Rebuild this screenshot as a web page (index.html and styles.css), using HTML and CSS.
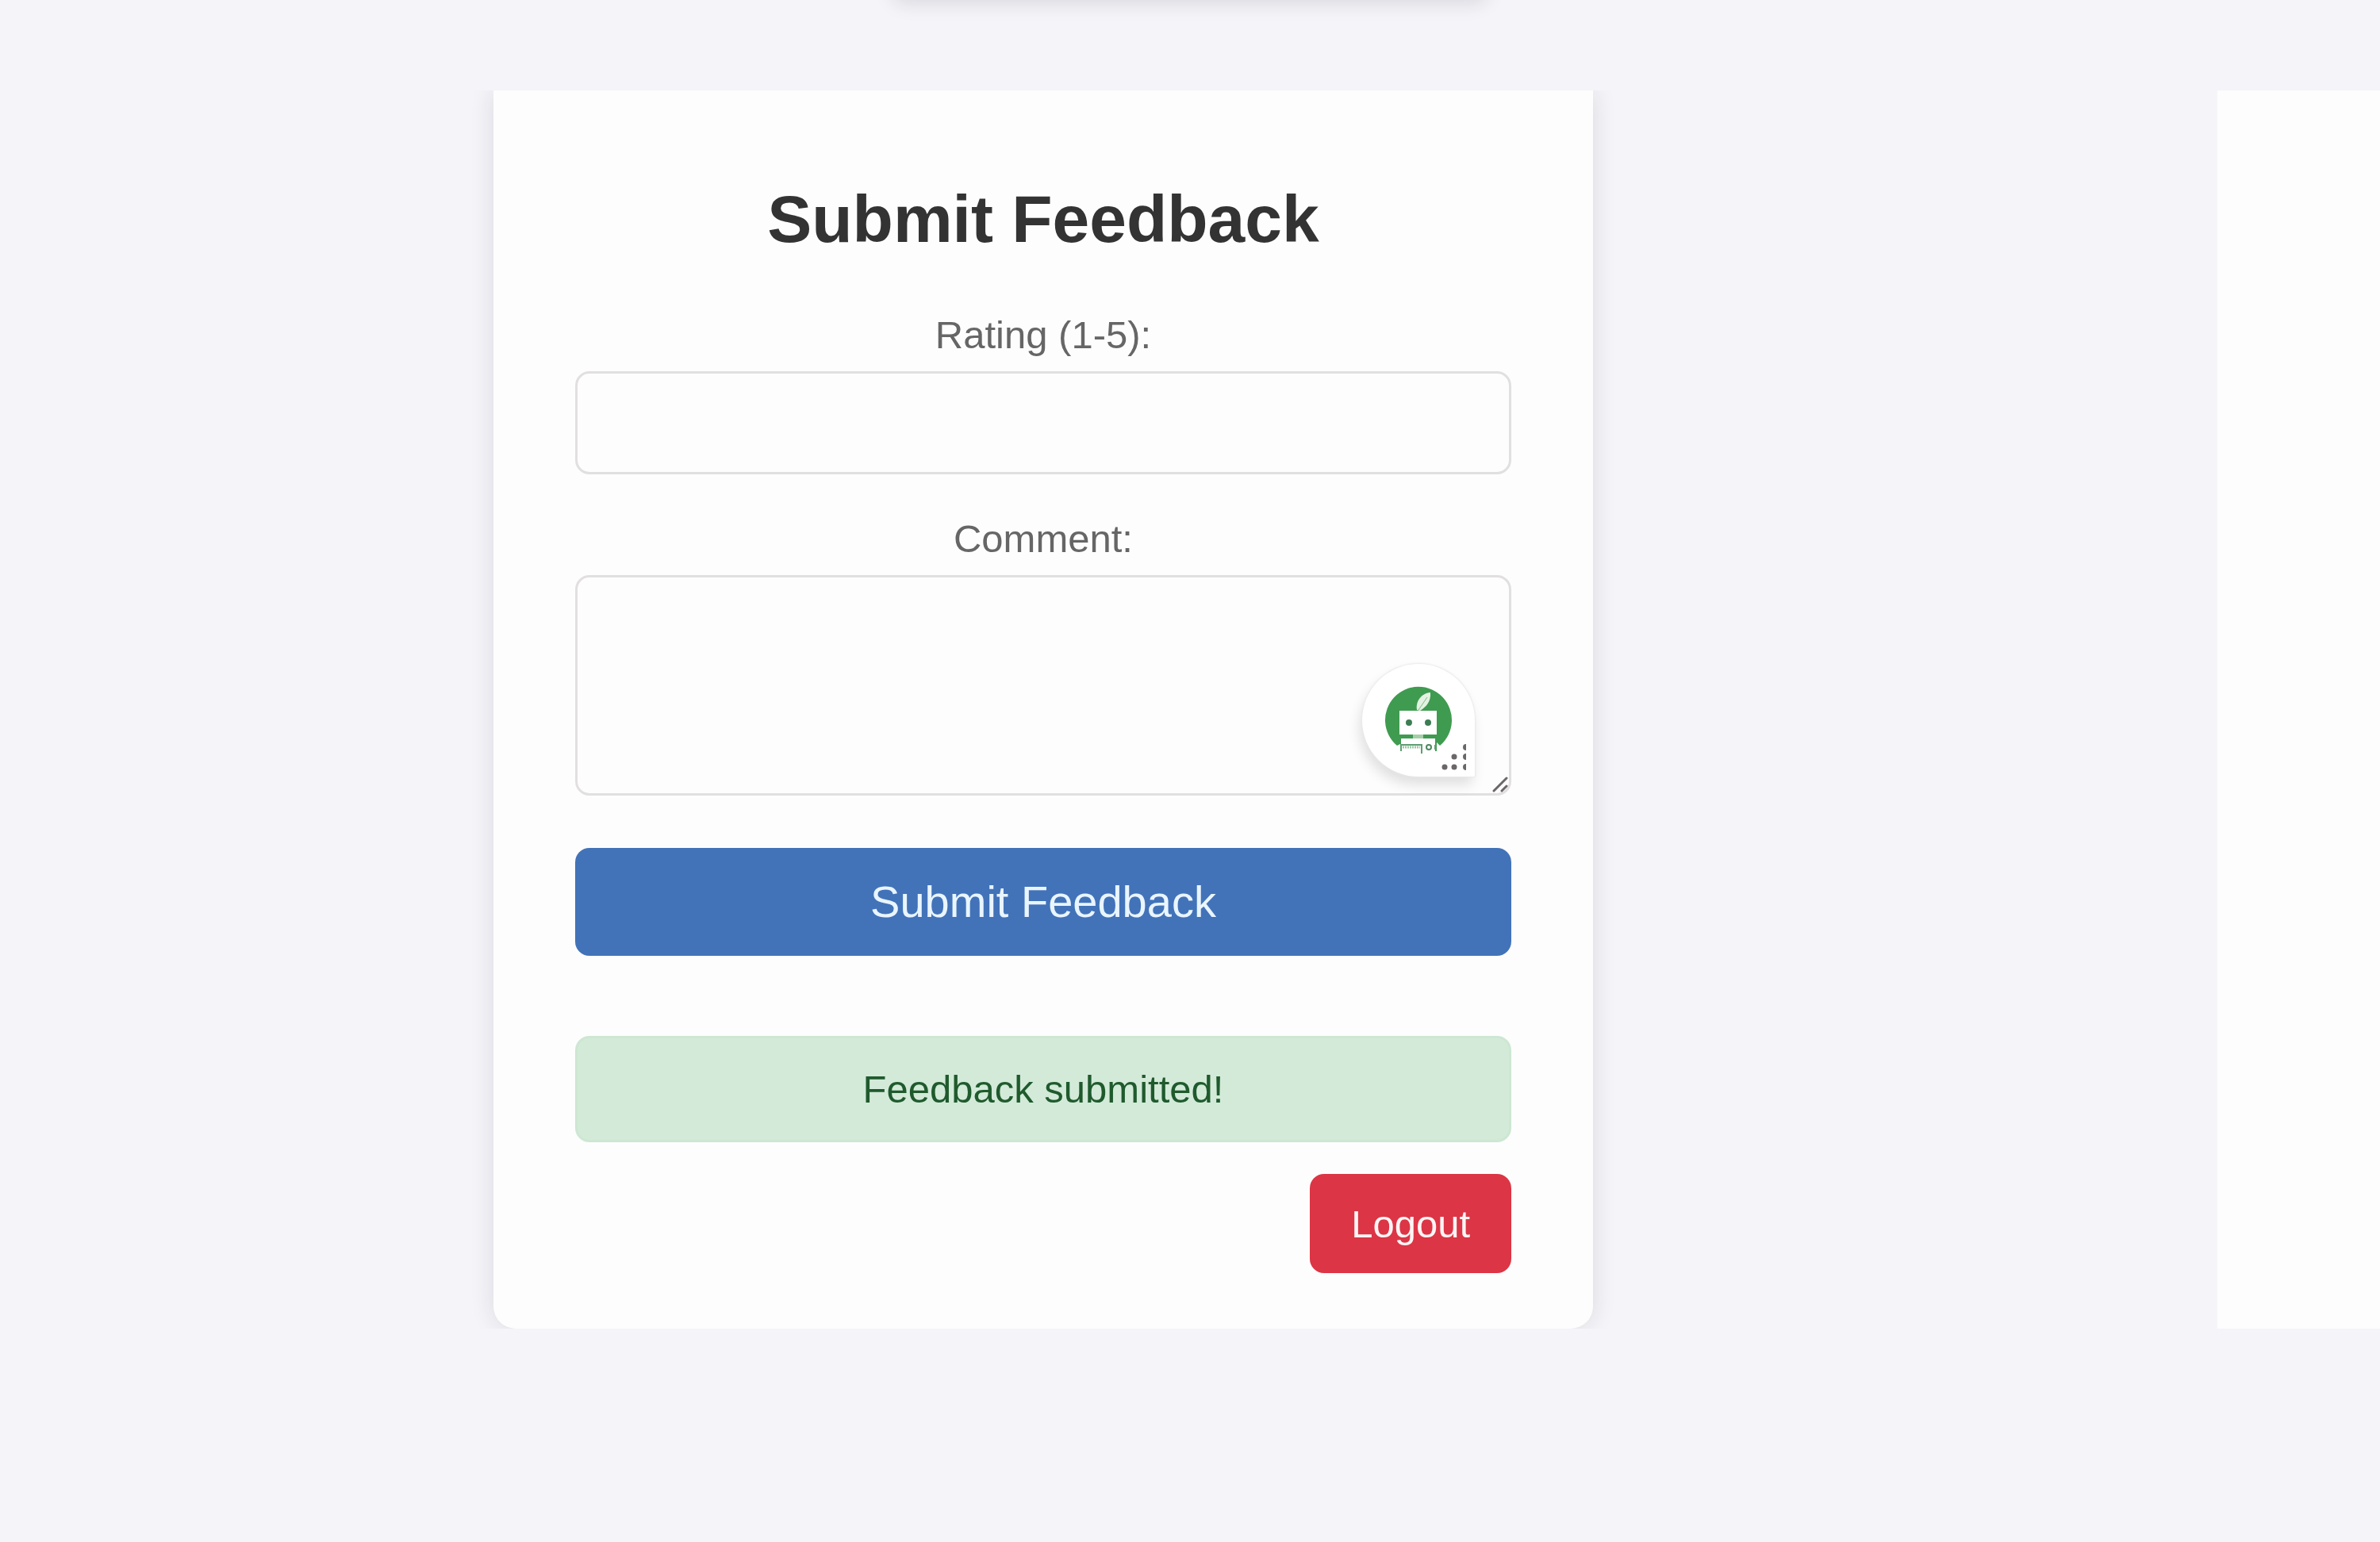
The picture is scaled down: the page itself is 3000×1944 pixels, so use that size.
FILE: index.html
```
<!DOCTYPE html>
<html lang="en">
<head>
<meta charset="utf-8">
<meta name="viewport" content="width=device-width, initial-scale=1">
<title>Submit Feedback</title>
<link rel="stylesheet" href="styles.css">
</head>
<body>
<header class="top"><div class="top-panel"></div></header>
<main class="stage">
  <section class="card">
    <h1 class="title">Submit Feedback</h1>
    <form class="form">
      <div class="field">
        <label class="label" for="rating">Rating (1-5):</label>
        <input class="control" id="rating" type="text" inputmode="numeric">
      </div>
      <div class="field">
        <label class="label" for="comment">Comment:</label>
        <div class="comment-box">
          <textarea class="control comment" id="comment"></textarea>
          <div class="assistant">
            <svg class="assistant-icon" viewBox="0 0 142 142" aria-hidden="true">
              <path d="M44 103A42 42 0 1 1 98 103L94 99V110H48V101Z" fill="#3f9b50"/>
              <path d="M69 58C67 48 74 37 86 36C87 47 81 54 73 59Z" fill="#e4f2e2"/>
              <path d="M71 58L82 42" stroke="#7dbb82" stroke-width="1" fill="none"/>
              <path d="M47 59H94V89H47Z" fill="#fff"/>
              <circle cx="59" cy="74" r="4" fill="#3d7d52"/>
              <circle cx="83" cy="74" r="4" fill="#3d7d52"/>
              <path d="M64 89H77V94H64Z" fill="#a5cfa8"/>
              <path d="M49 94H92V113H49Z" fill="#fff"/>
              <path d="M49 110V102H75V113" stroke="#5f9f72" stroke-width="2" fill="none"/>
              <path d="M51 105H73" stroke="#9bc9a4" stroke-width="3" stroke-dasharray="2 1" fill="none"/>
              <circle cx="84" cy="105" r="3" stroke="#4d8a5c" stroke-width="2" fill="#fff"/>
              <path d="M92 102V108" stroke="#5f9f72" stroke-width="2"/>
              <g fill="#6a6669">
                <circle cx="116" cy="117" r="3.5"/><circle cx="104" cy="130" r="3.5"/><circle cx="116" cy="130" r="3.5"/>
                <path d="M131 101V109A4 4 0 1 1 131 101ZM131 113V121A4 4 0 1 1 131 113ZM131 126V134A4 4 0 1 1 131 126Z"/>
              </g>
            </svg>
          </div>
          <svg class="grip" viewBox="0 0 20 20" aria-hidden="true"><path d="M2 18L18 2M12 18L18 12" stroke="#6b6769" stroke-width="3" stroke-linecap="round"/></svg>
        </div>
      </div>
      <button class="button submit" type="button">Submit Feedback</button>
    </form>
    <p class="alert" role="status">Feedback submitted!</p>
    <button class="button logout" type="button">Logout</button>
  </section>
  <div class="next-panel"></div>
</main>
</body>
</html>
```
FILE: styles.css
```
* { box-sizing: border-box; }

body {
  margin: 0;
  min-height: 100vh;
  background: #f4f4f9;
  font-family: "Liberation Sans", Arial, sans-serif;
  font-size: 49px;
  line-height: 56px;
}

.top {
  height: 114px;
  overflow: hidden;
}

.top-panel {
  width: 25%;
  height: 60px;
  margin: -60px auto 0;
  border-radius: 16px;
  background: #fdfdfd;
  box-shadow: 0 4px 24px rgba(40, 30, 40, 0.13);
}

.stage {
  display: grid;
  grid-template-columns: 622fr 1386fr 787fr 205fr;
  overflow: hidden;
}

.card {
  grid-column: 2;
  display: flex;
  flex-direction: column;
  padding: 112px 103px 70px;
  border-radius: 0 0 28px 28px;
  background: #fdfdfd;
  box-shadow: 0 0 30px rgba(30, 30, 40, 0.12);
}

.next-panel {
  grid-column: 4;
  background: #fdfdfd;
}

.title {
  margin: 0 0 68px;
  color: #333;
  font-size: 84px;
  line-height: 100px;
  text-align: center;
}

.form {
  display: flex;
  flex-direction: column;
  gap: 53px;
}

.field {
  display: flex;
  flex-direction: column;
  gap: 18px;
}

.label {
  color: #666;
  text-align: center;
}

.control {
  display: block;
  width: 100%;
  height: 130px;
  padding: 24px;
  border: 3px solid #e2dfe0;
  border-radius: 18px;
  outline: 0;
  background: #fdfdfd;
  color: #333;
  font: inherit;
}

.comment-box { position: relative; }

.comment {
  height: 278px;
  resize: none;
}

.assistant {
  position: absolute;
  right: 46px;
  bottom: 24px;
  width: 142px;
  height: 142px;
  border-radius: 71px 71px 2px 71px;
  background: #fff;
  box-shadow: 0 0 2px 1px #ebe9ea, -3px 10px 16px rgba(0, 0, 0, 0.12);
}

.assistant-icon { display: block; }

.grip {
  position: absolute;
  right: 4px;
  bottom: 4px;
  width: 20px;
  height: 20px;
}

.button {
  border: 0;
  border-radius: 18px;
  font: inherit;
  cursor: pointer;
}

.submit {
  height: 136px;
  margin-top: 13px;
  background: #4273b9;
  color: #e9f5ff;
  font-size: 56px;
}

.alert {
  margin: 101px 0 40px;
  padding: 36px;
  border: 3px solid #cde7d2;
  border-radius: 18px;
  background: #d3ead9;
  color: #1f5a2d;
  text-align: center;
}

.logout {
  align-self: flex-end;
  height: 125px;
  padding: 0 52px;
  background: #dc3545;
  color: #fff5f5;
}
```
